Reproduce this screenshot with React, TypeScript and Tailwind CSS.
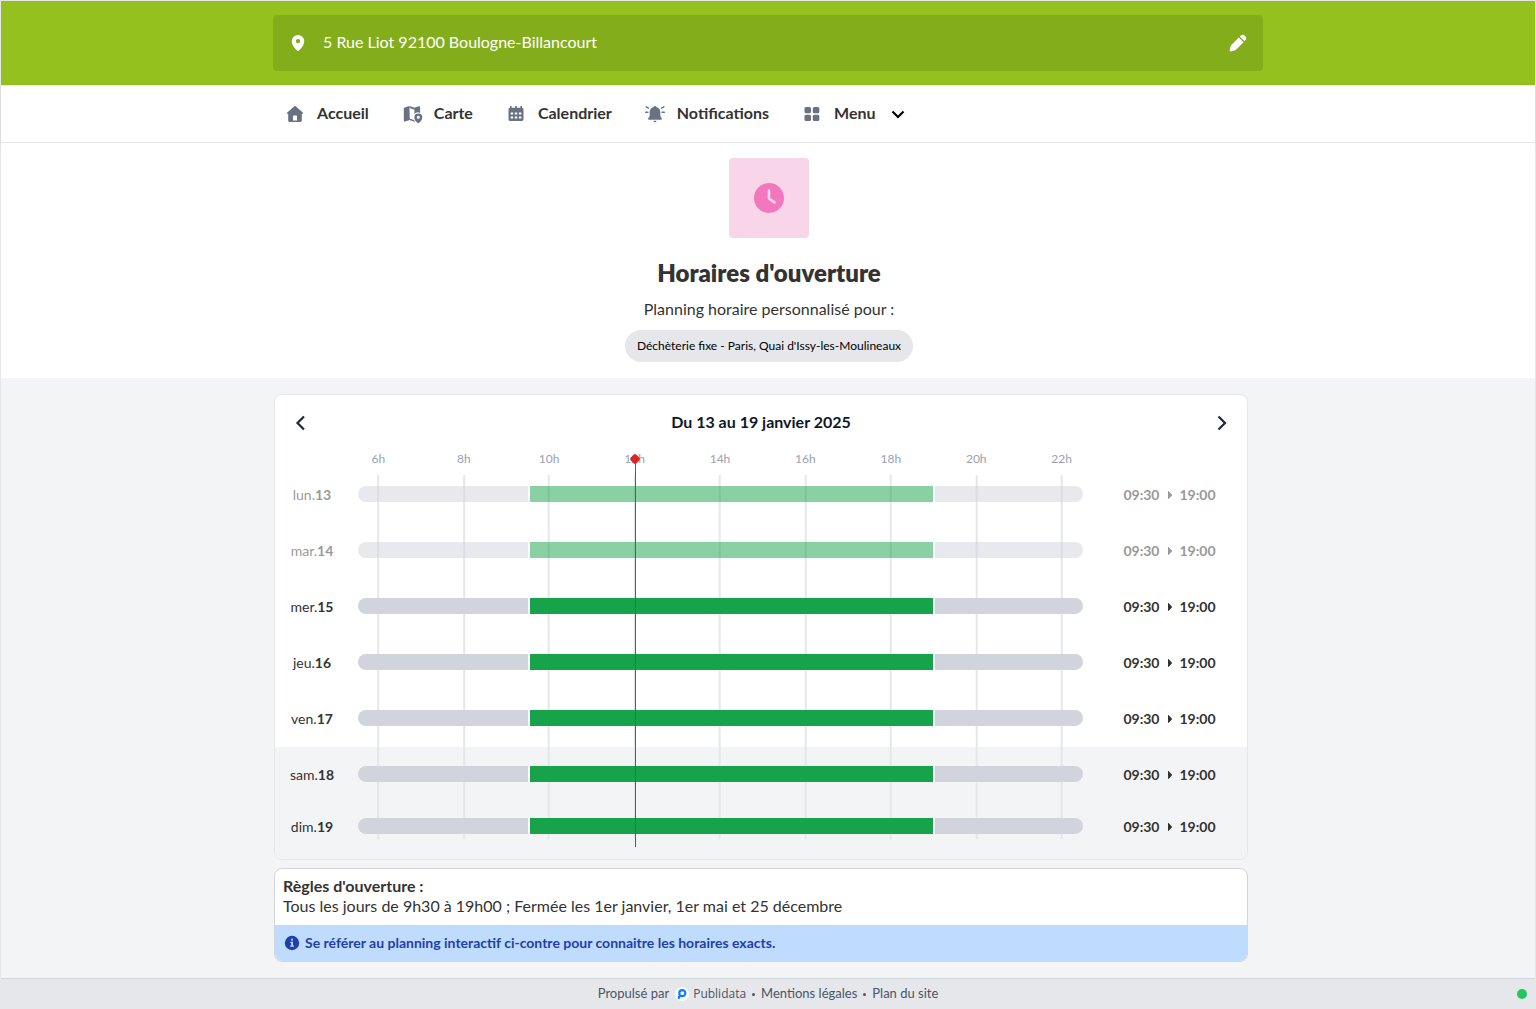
import type { ReactNode } from 'react';

const OPENING_START = 5.5;
const OPENING_END = 22.5;
const NOW = 12;
const HOURS = [6, 8, 10, 12, 14, 16, 18, 20, 22];

interface Day {
  name: string;
  date: number;
  open: number;
  close: number;
  past?: boolean;
}

const WEEKDAYS: Day[] = [
  { name: 'lun.', date: 13, open: 9.5, close: 19, past: true },
  { name: 'mar.', date: 14, open: 9.5, close: 19, past: true },
  { name: 'mer.', date: 15, open: 9.5, close: 19 },
  { name: 'jeu.', date: 16, open: 9.5, close: 19 },
  { name: 'ven.', date: 17, open: 9.5, close: 19 },
];

const WEEKEND: Day[] = [
  { name: 'sam.', date: 18, open: 9.5, close: 19 },
  { name: 'dim.', date: 19, open: 9.5, close: 19 },
];

function position(hour: number) {
  return `${((hour - OPENING_START) / (OPENING_END - OPENING_START)) * 100}%`;
}

function formatHour(hour: number) {
  const minutes = (hour % 1) * 60;
  return `${String(Math.floor(hour)).padStart(2, '0')}:${String(minutes).padStart(2, '0')}`;
}

function Icon({ children }: { children: ReactNode }) {
  return (
    <svg viewBox="0 0 24 24" className="size-6 shrink-0" fill="currentColor" aria-hidden="true">
      {children}
    </svg>
  );
}

function HomeIcon() {
  return (
    <Icon>
      <path
        fillRule="evenodd"
        d="M11.3 4.3a1 1 0 0 1 1.4 0l7 6.3c.6.6.3 1.5-.5 1.5h-.4v6.4c0 .8-.6 1.5-1.4 1.5H6.6c-.8 0-1.4-.7-1.4-1.5v-6.4h-.4c-.8 0-1.1-.9-.5-1.5ZM10.6 13.6a.6.6 0 0 0-.6.6v4.4h4v-4.4a.6.6 0 0 0-.6-.6Z"
      />
    </Icon>
  );
}

function MapIcon() {
  return (
    <Icon>
      <path d="M9.4 4.1 4.7 5.5c-.6.2-.9.6-.9 1.2v12c0 .7.5 1.1 1.2.9l4.8-1.6Z" />
      <path d="m9.400 4.100 5.400 1.700v1.900L9.400 5.900ZM9.400 16.400l4.600 1.600 1.300 2.100-5.900-2.100Z" />
      <path d="m14.400 5.800 4.400-1.500c.7-.2 1.300.1 1.300.8v5.800a4.800 4.800 0 0 0-5.700 1Z" />
      <path
        fillRule="evenodd"
        d="M18.300 11.400a4 4 0 0 0-4 4c0 2.400 1.900 4.200 3.500 5.500.3.300.7.300 1 0 1.600-1.300 3.500-3.100 3.500-5.500a4 4 0 0 0-4-4Zm0 5.400a1.500 1.500 0 1 1 0-3 1.500 1.500 0 0 1 0 3Z"
      />
    </Icon>
  );
}

function CalendarIcon() {
  return (
    <Icon>
      <path
        fillRule="evenodd"
        d="M7.600 4v1.700h3.500V4h1.800v1.700h3.500V4H18v1.700c.9.100 1.500.8 1.500 1.700v9.800c0 1-.8 1.800-1.800 1.800H6.300c-1 0-1.800-.8-1.800-1.800V7.400c0-.9.600-1.600 1.500-1.700V4ZM6.700 10.600v2h2.400v-2Zm4.100 0v2h2.400v-2Zm4.100 0v2h2.400v-2Zm-8.200 4v2h2.400v-2Zm4.100 0v2h2.400v-2Zm4.100 0v2h2.400v-2Z"
      />
    </Icon>
  );
}

function BellIcon() {
  return (
    <Icon>
      <path d="M10.600 4.900a1.500 1.500 0 0 1 2.800 0c2.400.6 3.900 2.600 3.900 5.200v3c0 1.300.5 2 1.400 3.100.5.700.1 1.500-.7 1.500H6c-.8 0-1.200-.8-.7-1.500.9-1.100 1.400-1.800 1.400-3.100v-3c0-2.600 1.500-4.600 3.900-5.200ZM10.500 18.800h3a1.500 1.500 0 0 1-3 0Z" />
      <path
        d="m3.200 4.900 2.200 1.200M2.700 10.200h2.200M20.800 4.900l-2.200 1.200M21.300 10.200h-2.200"
        fill="none"
        stroke="currentColor"
        strokeWidth="1.500"
        strokeLinecap="round"
      />
    </Icon>
  );
}

function GridIcon() {
  return (
    <Icon>
      <rect x="4.500" y="5" width="6.500" height="6.200" rx="1.500" />
      <rect x="12.800" y="5" width="6.500" height="6.200" rx="1.500" />
      <rect x="4.500" y="12.800" width="6.500" height="6.200" rx="1.500" />
      <rect x="12.800" y="12.800" width="6.500" height="6.200" rx="1.500" />
    </Icon>
  );
}

function Chevron({ d }: { d: string }) {
  return (
    <Icon>
      <path d={d} fill="none" stroke="currentColor" strokeWidth="2.200" />
    </Icon>
  );
}

const NAV_ITEMS = [
  { label: 'Accueil', icon: <HomeIcon /> },
  { label: 'Carte', icon: <MapIcon /> },
  { label: 'Calendrier', icon: <CalendarIcon /> },
  { label: 'Notifications', icon: <BellIcon /> },
];

function Header() {
  return (
    <header>
      <div className="bg-[#95c11f] py-3.5">
        <div className="mx-auto max-w-[990px]">
          <button
            type="button"
            className="flex h-14 w-full items-center gap-[13px] rounded bg-[#84ad1b] px-[13px] text-left text-white"
          >
            <Icon>
              <path
                fillRule="evenodd"
                d="M12 4a6.200 6.200 0 0 0-6.200 6.200c0 4 3.400 7.400 5.600 9.600a.9.9 0 0 0 1.200 0c2.200-2.200 5.600-5.600 5.600-9.600A6.200 6.200 0 0 0 12 4Zm0 8.300a2.200 2.200 0 1 1 0-4.400 2.200 2.200 0 0 1 0 4.400Z"
              />
            </Icon>
            <span className="flex-1 pb-0.5">5 Rue Liot 92100 Boulogne-Billancourt</span>
            <Icon>
              <path d="m12.800 6.500 4.700 4.700-7 7c-1.700 1.600-3.900 2-6.800 2.100.1-2.900.5-5.100 2.100-6.800ZM13.800 5.500l.6-.6a3.300 3.300 0 0 1 4.700 4.700l-.6.600Z" />
            </Icon>
          </button>
        </div>
      </div>
      <nav className="border-y border-gray-200 bg-white shadow-sm">
        <div className="mx-auto flex h-14 max-w-[990px] items-center gap-[31px] px-2.5 font-bold">
          {NAV_ITEMS.map((item) => (
            <a key={item.label} href="#" className="flex items-center gap-2.5 text-gray-500">
              {item.icon}
              <span className="pb-0.5 text-[#333]">{item.label}</span>
            </a>
          ))}
          <button type="button" className="flex items-center gap-2.5 text-gray-500">
            <GridIcon />
            <span className="pb-0.5 text-[#333]">Menu</span>
            <span className="text-black">
              <Chevron d="m6.500 9.500 5.500 5.500 5.500-5.500" />
            </span>
          </button>
        </div>
      </nav>
    </header>
  );
}

function Hero() {
  return (
    <section className="flex flex-col items-center bg-white pt-[15px] pb-4 pl-0.5 text-center">
      <div className="flex size-20 items-center justify-center rounded bg-[#f9d5ea]">
        <svg viewBox="0 0 30 30" className="size-[30px]" aria-hidden="true">
          <circle cx="15" cy="15" r="15" fill="#f277be" />
          <path
            d="M15 7.500v8.200l5.600 3.700"
            fill="none"
            stroke="#f9d5ea"
            strokeWidth="2.600"
            strokeLinecap="round"
            strokeLinejoin="round"
          />
        </svg>
      </div>
      <h1 className="mt-[19px] text-2xl font-extrabold">Horaires d'ouverture</h1>
      <p className="mt-2">Planning horaire personnalisé pour :</p>
      <span className="mt-[9px] flex h-8 items-center rounded-full bg-gray-200 px-3 text-xs text-black">
        Déchèterie fixe - Paris, Quai d'Issy-les-Moulineaux
      </span>
    </section>
  );
}

function DayRow({ day }: { day: Day }) {
  return (
    <li
      className={`relative z-10 grid grid-cols-[74px_1fr_155px] items-center text-sm ${
        day.past ? 'opacity-50' : ''
      }`}
    >
      <div className="pt-0.5 text-center">
        {day.name}
        <span className="font-bold">{day.date}</span>
      </div>
      <div className="px-[9px]">
        <div className="flex h-4 gap-0.5 overflow-hidden rounded-full bg-white">
          <div className="bg-[#d1d4dc]" style={{ flexGrow: day.open - OPENING_START }} />
          <div className="bg-[#16a34a]" style={{ flexGrow: day.close - day.open }} />
          <div className="bg-[#d1d4dc]" style={{ flexGrow: OPENING_END - day.close }} />
        </div>
      </div>
      <div className="flex items-center justify-center gap-2 pt-0.5 font-bold">
        <span>{formatHour(day.open)}</span>
        <svg viewBox="0 0 4 8" className="h-2 w-1" fill="currentColor" aria-hidden="true">
          <path d="M0 .5C0 .1.500-.1.800.2L3.800 3.500c.3.300.3.700 0 1L.8 7.800c-.3.300-.8.100-.8-.3Z" />
        </svg>
        <span>{formatHour(day.close)}</span>
      </div>
    </li>
  );
}

function Planning() {
  return (
    <div className="overflow-hidden rounded-lg border border-gray-200 bg-white">
      <div className="flex h-14 items-center justify-between px-[13px] text-gray-800">
        <button type="button" aria-label="Semaine précédente">
          <Chevron d="m16 5.500-6.500 6.500 6.500 6.500" />
        </button>
        <h2 className="pb-0.5 font-bold text-gray-900">Du 13 au 19 janvier 2025</h2>
        <button type="button" aria-label="Semaine suivante">
          <Chevron d="m8.500 5.500 6.500 6.500-6.500 6.500" />
        </button>
      </div>

      <div className="relative isolate pt-4">
        <ul className="flex flex-col gap-[34px] pt-4 pb-[18px]">
          {WEEKDAYS.map((day) => (
            <DayRow key={day.date} day={day} />
          ))}
        </ul>
        <ul className="flex flex-col gap-[30px] bg-gray-100 pt-4 pb-[22px]">
          {WEEKEND.map((day) => (
            <DayRow key={day.date} day={day} />
          ))}
        </ul>

        {/* Hour scale, behind the bars */}
        <div className="absolute inset-y-0 right-[164px] left-[82px]">
          {HOURS.map((hour) => (
            <div
              key={hour}
              className="absolute inset-y-0 flex -translate-x-1/2 flex-col items-center"
              style={{ left: position(hour) }}
            >
              <span className="text-xs text-gray-400">{hour}h</span>
              <span className="mt-2 mb-5 w-0.5 flex-1 bg-gray-200" />
            </div>
          ))}
        </div>

        {/* Current time */}
        <div className="pointer-events-none absolute inset-y-0 right-[164px] left-[83px] z-20">
          <div className="absolute top-2 bottom-3 w-px bg-[#dc2626]" style={{ left: position(NOW) }}>
            <div className="absolute -top-1 -left-1 size-2 rotate-45 rounded-[2px] bg-[#dc2626]" />
          </div>
        </div>
      </div>
    </div>
  );
}

function Rules() {
  return (
    <div className="mt-2 overflow-hidden rounded-lg border border-gray-300 bg-white">
      <div className="px-2 pt-[7px] pb-[9px] leading-5">
        <h3 className="font-bold">Règles d'ouverture :</h3>
        <p>Tous les jours de 9h30 à 19h00 ; Fermée les 1er janvier, 1er mai et 25 décembre</p>
      </div>
      <div className="flex items-center gap-1 bg-[#bfdbfe] p-2 text-sm font-bold text-[#1e40af]">
        <svg viewBox="0 0 18 18" className="size-[18px]" aria-hidden="true">
          <circle cx="9" cy="9" r="7.200" fill="currentColor" />
          <path d="M8.200 4.800h1.800v1.700H8.200ZM7.300 7.700H10v3.700h1v1.300H7.200v-1.300h1V9h-.9Z" fill="#bfdbfe" />
        </svg>
        Se référer au planning interactif ci-contre pour connaitre les horaires exacts.
      </div>
    </div>
  );
}

function Footer() {
  return (
    <footer className="relative flex h-[31px] items-center justify-center gap-1.5 border-t border-gray-300 bg-gray-200 text-[13px] text-gray-600">
      <span>Propulsé par</span>
      <a href="#" className="flex items-center gap-1">
        <svg viewBox="0 0 14 14" className="size-3.5" aria-hidden="true">
          <circle cx="7" cy="7" r="7" fill="#fff" />
          <circle cx="7.300" cy="6.200" r="3" fill="none" stroke="#0a7cff" strokeWidth="2.200" />
          <path d="M2.900 8.700h2.300v2.100a1.100 1.100 0 0 1-1.100 1.100H2.900Z" fill="#0a7cff" />
        </svg>
        <span className="font-['Open_Sans',sans-serif] text-xs">Publidata</span>
      </a>
      <span className="size-[3px] rounded-full bg-gray-600" />
      <a href="#">Mentions légales</a>
      <span className="size-[3px] rounded-full bg-gray-600" />
      <a href="#">Plan du site</a>
      <span className="absolute right-2 size-2.5 rounded-full bg-[#22c55e]" />
    </footer>
  );
}

export default function App() {
  return (
    <div className="flex min-h-screen flex-col border border-b-0 border-gray-200 bg-gray-100 font-['Lato',sans-serif] text-base text-[#333]">
      <Header />
      <main className="flex-1">
        <Hero />
        <section className="py-4 pl-0.5">
          <div className="mx-auto max-w-[990px] pr-4">
            <Planning />
            <Rules />
          </div>
        </section>
      </main>
      <Footer />
    </div>
  );
}
